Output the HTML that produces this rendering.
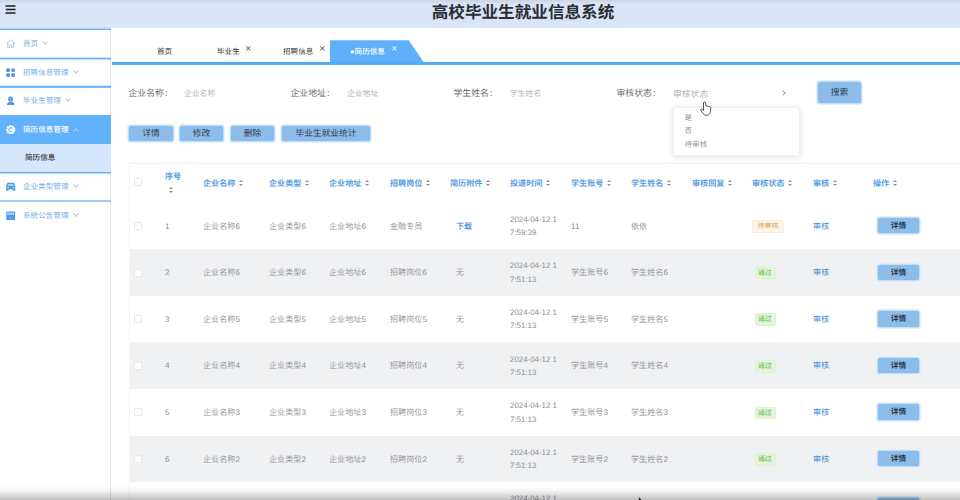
<!DOCTYPE html><html lang="zh-CN"><head><meta charset="utf-8"><title>高校毕业生就业信息系统</title><style>*{box-sizing:border-box;margin:0;padding:0}
html,body{width:960px;height:500px;overflow:hidden;background:#fff}
body{position:relative;text-rendering:geometricPrecision;font-family:"Liberation Sans","Noto Sans CJK SC",sans-serif;color:#666}
.abs,span.th,span.td,span.tag,span.btn,span.cb,span.sort,.tr{position:absolute}
.tbl-l{position:absolute;left:129px;top:163px;width:1px;height:337px;background:#f5f5f6}
.header{position:absolute;left:0;top:0;width:960px;height:28px;background:linear-gradient(to bottom,#c8d4e5 0,#d9e5f6 4px,#d9e5f6 21px,#dce6fb 27px)}
.header .hl{display:none}
.title{position:absolute;left:0;width:960px;top:0;height:28px;line-height:25px;text-align:center;font-size:16.6px;font-weight:bold;color:#2a2f36;padding-left:86px;letter-spacing:0}
.burger{position:absolute;left:6px;top:6px;width:10px;height:8px}
.burger i{position:absolute;left:0;width:10px;height:1.6px;background:#222}
.side{position:absolute;left:0;top:28px;width:111px;height:472px;background:#fff;border-right:1px solid #e6e6e6}
.mi{position:absolute;left:0;width:111px;height:29px;overflow:hidden;border-top:0;background:transparent;color:#78b0e4;font-size:7.6px;line-height:29px;padding-left:23px;white-space:nowrap}
.mi.act{background:#61b1fb;color:#fff;font-weight:500}
.mi.sub{background:#d5e7fc;color:#2e3238;padding-left:25px;font-weight:500}
.mi svg{position:absolute;left:6.2px;top:var(--it);width:9.4px;height:9.4px}
.mi .arr{display:inline-block;width:4px;height:4px;border-right:1px solid #a9c9e8;border-bottom:1px solid #a9c9e8;transform:rotate(45deg);margin-left:5px;position:relative;top:-2px}
.mi.act .arr{border-color:#a3d2fb;transform:rotate(225deg);top:1px}
.tabs{position:absolute;left:112px;top:62px;width:848px;height:3px;background:#56aaf1}
.tab{position:absolute;top:41px;height:21px;line-height:21px;font-size:7.6px;color:#333;white-space:nowrap}
.tab .x{position:absolute;top:-2px;font-size:11px;color:#666}
.tabact{position:absolute;left:329.7px;top:40.2px;width:95px;height:22px;background:#5eb0fa;clip-path:polygon(0 0,79px 0,94px 22px,0 22px)}
.lbl{position:absolute;font-size:8.9px;color:#595c63;font-weight:350;margin-left:-.5px;white-space:nowrap}
.ph{position:absolute;font-size:7.8px;color:#a8abb2;font-weight:350;white-space:nowrap}
span.btn{background:#8bbcea;color:#34404e;text-align:center;font-size:8.7px;border-radius:2px;box-shadow:0 0 0 .6px #a9d0f4,0 0 0 2px rgba(222,236,251,.85);white-space:nowrap}
span.btn.sm{font-size:7.7px;font-weight:700;color:#2c3846}
.dd{position:absolute;left:673px;top:107px;width:127px;height:49px;background:#fff;border-radius:3px;box-shadow:0 1px 6px rgba(0,0,0,.13);border:1px solid #f0f0f0}
.dd span{position:absolute;left:10.5px;font-size:7.6px;color:#999;white-space:nowrap}
.tbl{position:absolute;left:0;top:0}
.th-row{position:absolute;left:129px;top:163px;width:831px;height:40px;border-top:1px solid #f0f0f0}
.th-row>*{margin-left:-129px;margin-top:-163px}
span.th{font-size:8.1px;font-weight:bold;color:#5a9fe0;white-space:nowrap;line-height:12px}
span.td{font-size:8.1px;color:#8c8e93;font-weight:350;white-space:nowrap;line-height:16px}
span.td.lnk{color:#3b8fd9;font-weight:400}
span.td.lnk.b{font-weight:500;color:#3388e0}
span.td.dt{font-size:7.9px}
.tr{left:129px;width:831px;background:#fff}
.tr.alt{background:#f0f1f3}
span.cb{width:8px;height:8px;border:1px solid #e6e8ee;border-radius:1px;background:#fff}
span.sort{width:6px;height:9px}
span.sort i{position:absolute;left:0;border-left:2.2px solid transparent;border-right:2.2px solid transparent}
span.sort i.u{top:0;border-bottom:2.7px solid #8d9095}
span.sort i.d{top:3.6px;border-top:2.7px solid #8d9095}
span.tag{white-space:nowrap;font-size:7px;height:12.8px;line-height:12.6px;padding:0 4.5px;border-radius:2px;border:1px solid}
span.tag.warn{color:#dc9f4a;background:#fdf5ea;border-color:#faecd8}
span.tag.ok{color:#5db53a;background:#e4f6da;border-color:#dcf2d0;padding:0 3.2px 0 1.7px}
.fade{position:absolute;left:0;top:486px;width:960px;height:14px;background:linear-gradient(to bottom,rgba(0,0,0,0),rgba(0,0,0,.04) 30%,rgba(0,0,0,.24))}

.ln{position:absolute;left:0;width:111px;height:1px;background:#62aff3}
</style></head><body>
<div class="header"><div class="hl"></div>
<svg class="burger" viewBox="0 0 11 9" style="left:5px;top:5px;width:11px;height:9px"><path d="M0.5 0.9H10.5M3 4.5H10.5M0.5 8.1H10.5" stroke="#1a1a1a" stroke-width="1.5" fill="none"/><path d="M2.6 2.9 L0.4 4.5 L2.6 6.1Z" fill="#1a1a1a"/></svg>
<div class="title">高校毕业生就业信息系统</div></div>
<div class="side">
<div class="ln" style="top:0px;opacity:0.6"></div><div class="ln" style="top:1px;opacity:0.9"></div><div class="ln" style="top:29px;opacity:0.3"></div><div class="ln" style="top:30px;opacity:1"></div><div class="ln" style="top:31px;opacity:0.4"></div><div class="ln" style="top:57px;opacity:0.2"></div><div class="ln" style="top:58px;opacity:1"></div><div class="ln" style="top:59px;opacity:0.8"></div><div class="ln" style="top:144px;opacity:1"></div><div class="ln" style="top:145px;opacity:0.5"></div><div class="ln" style="top:172px;opacity:0.6"></div><div class="ln" style="top:173px;opacity:0.65"></div>
<div class="mi" style="top:0px;height:29px;line-height:32.2px;--it:11.1px"><svg viewBox="0 0 10 10"><path d="M0.7 4.9 L5 0.9 L9.3 4.9 M1.9 4.2 V9.2 H3.9 V6.4 H6.1 V9.2 H8.1 V4.2" fill="none" stroke="#93c2ee" stroke-width="0.9" stroke-linejoin="round" stroke-linecap="round"/></svg>首页<i class="arr"></i></div>
<div class="mi" style="top:29px;height:29px;line-height:31.0px;--it:10.5px"><svg viewBox="0 0 10 10"><rect x="0.2" y="0.2" width="4.1" height="4.1" rx="1.3" fill="#4d9be6"/><rect x="5.5" y="0.2" width="4.1" height="4.1" rx="2" fill="#4d9be6"/><rect x="0.2" y="5.5" width="4.1" height="4.1" rx="1.3" fill="#4d9be6"/><rect x="5.5" y="5.5" width="4.1" height="4.1" rx="1.3" fill="#4d9be6"/></svg>招聘信息管理<i class="arr"></i></div>
<div class="mi" style="top:58px;height:29px;line-height:30.0px;--it:10.0px"><svg viewBox="0 0 10 10"><circle cx="5" cy="3.1" r="2.7" fill="#4d9be6"/><circle cx="5" cy="3.1" r="1.1" fill="#8cc0f2"/><path d="M0.9 10 C1 7.4 2.6 6.2 5 6.2 C7.4 6.2 9 7.4 9.1 10 Z" fill="#4d9be6"/></svg>毕业生管理<i class="arr"></i></div>
<div class="mi act" style="top:87px;height:29px;line-height:29.0px;--it:9.5px"><svg viewBox="0 0 10 10"><circle cx="5" cy="5" r="4.3" fill="none" stroke="#fff" stroke-width="1.4" stroke-dasharray="1.9 1.1"/><circle cx="5" cy="5" r="4" fill="#fff"/><path d="M6.6 3.6 A2.1 2.1 0 1 0 6.6 6.4" fill="none" stroke="#61b1fb" stroke-width="1.1"/></svg>简历信息管理<i class="arr"></i></div>
<div class="mi sub" style="top:116px;height:28px;line-height:28.0px;--it:9.0px">简历信息</div>
<div class="mi" style="top:144px;height:28px;line-height:29.2px;--it:9.6px"><svg viewBox="0 0 10 10"><path d="M2.2 0.8 H7.8 C8.4 0.8 8.8 1.1 9 1.7 L9.8 4.6 V9.4 H7.4 V8 H2.6 V9.4 H0.2 V4.6 L1 1.7 C1.2 1.1 1.6 0.8 2.2 0.8 Z" fill="#4d9be6"/><path d="M2.3 2 H7.7 L8.3 4.2 H1.7 Z" fill="#a9d1f7"/><circle cx="2.3" cy="6" r="0.8" fill="#cfe6fb"/><circle cx="7.7" cy="6" r="0.8" fill="#cfe6fb"/></svg>企业类型管理<i class="arr"></i></div>
<div class="mi" style="top:172px;height:29px;line-height:31.4px;--it:10.7px"><svg viewBox="0 0 10 10"><rect x="0.3" y="0.5" width="9.4" height="9.2" rx="0.8" fill="#4d9be6"/><path d="M1.2 1.6 H8.8 V3.3 C8.8 4.4 7.3 4.5 6.9 3.7 C6.5 4.5 5.4 4.5 5 3.7 C4.6 4.5 3.5 4.5 3.1 3.7 C2.7 4.5 1.2 4.4 1.2 3.3 Z" fill="#b9dafa"/><path d="M3.1 1.6V3.6M5 1.6V3.6M6.9 1.6V3.6" stroke="#4d9be6" stroke-width="0.5"/><rect x="3.6" y="6.6" width="2.8" height="1.4" fill="#7db8f0"/></svg>系统公告管理<i class="arr"></i></div>
</div>
<div class="tabs"></div>
<div class="tabact"></div>
<div class="tab" style="left:157px">首页</div>
<div class="tab" style="left:217px">毕业生<span class="x" style="left:28px">×</span></div>
<div class="tab" style="left:283px">招聘信息<span class="x" style="left:36px">×</span></div>
<div class="tab" style="left:350px;color:#fff;font-weight:500">●简历信息<span class="x" style="left:41px;color:#eaf4ff">×</span></div>
<div class="lbl" style="left:129px;top:86.4px">企业名称<i style="font-style:normal;margin-left:1px">:</i></div><div class="ph" style="left:184px;top:87.5px">企业名称</div>
<div class="lbl" style="left:291px;top:86.4px">企业地址<i style="font-style:normal;margin-left:1px">:</i></div><div class="ph" style="left:347px;top:87.5px">企业地址</div>
<div class="lbl" style="left:454px;top:86.4px">学生姓名<i style="font-style:normal;margin-left:1px">:</i></div><div class="ph" style="left:510px;top:87.5px">学生姓名</div>
<div class="lbl" style="left:617px;top:86.4px">审核状态<i style="font-style:normal;margin-left:1px">:</i></div><div class="ph" style="left:673px;top:86.6px;font-size:8.8px;color:#a8abb2">审核状态</div>
<div class="abs" style="position:absolute;left:781px;top:90.5px;width:4px;height:4px;border-top:1px solid #aaa;border-right:1px solid #aaa;transform:rotate(45deg)"></div>
<span class="btn" style="left:818px;top:82px;width:43px;height:21.3px;line-height:21px">搜索</span>
<div class="dd"><span style="top:3.7px">是</span><span style="top:17.3px">否</span><span style="top:31px">待审核</span></div>
<svg class="abs" style="position:absolute;left:700px;top:101px;width:12px;height:15px" viewBox="0 0 12 15"><path d="M3.5 1.8 C3.5 0.8 5.7 0.8 5.7 1.8 V4.8 L9.6 5.5 C10.6 5.8 10.9 6.4 10.8 7.3 L10.4 10.6 C10.2 12.6 9 14.2 7.2 14.2 H5.8 C4.8 14.2 4 13.7 3.3 12.7 L0.7 9.3 C0.1 8.4 1.3 7.5 2.1 8.3 L3.5 9.5 Z" fill="#fff" stroke="#333" stroke-width="0.85" stroke-linejoin="round"/></svg>
<span class="btn" style="left:129px;top:126px;width:44px;height:15.4px;line-height:15px">详情</span>
<span class="btn" style="left:180px;top:126px;width:43px;height:15.4px;line-height:15px">修改</span>
<span class="btn" style="left:231px;top:126px;width:43px;height:15.4px;line-height:15px">删除</span>
<span class="btn" style="left:282px;top:126px;width:88px;height:15.4px;line-height:15px">毕业生就业统计</span>

<div class="tbl">
<div class="th-row">
<span class="cb" style="left:134px;top:176.5px"></span>
<span class="th" style="left:165px;top:170px">序号</span><span class="sort" style="left:168.5px;top:186px"><i class="u"></i><i class="d"></i></span>
<span class="th" style="left:203px;top:177px">企业名称</span><span class="sort" style="left:239.4px;top:179px"><i class="u"></i><i class="d"></i></span>
<span class="th" style="left:269px;top:177px">企业类型</span><span class="sort" style="left:305.4px;top:179px"><i class="u"></i><i class="d"></i></span>
<span class="th" style="left:329px;top:177px">企业地址</span><span class="sort" style="left:365.4px;top:179px"><i class="u"></i><i class="d"></i></span>
<span class="th" style="left:390px;top:177px">招聘岗位</span><span class="sort" style="left:426.4px;top:179px"><i class="u"></i><i class="d"></i></span>
<span class="th" style="left:450px;top:177px">简历附件</span><span class="sort" style="left:486.4px;top:179px"><i class="u"></i><i class="d"></i></span>
<span class="th" style="left:510px;top:177px">投递时间</span><span class="sort" style="left:546.4px;top:179px"><i class="u"></i><i class="d"></i></span>
<span class="th" style="left:571px;top:177px">学生账号</span><span class="sort" style="left:607.4px;top:179px"><i class="u"></i><i class="d"></i></span>
<span class="th" style="left:631px;top:177px">学生姓名</span><span class="sort" style="left:667.4px;top:179px"><i class="u"></i><i class="d"></i></span>
<span class="th" style="left:692px;top:177px">审核回复</span><span class="sort" style="left:728.4px;top:179px"><i class="u"></i><i class="d"></i></span>
<span class="th" style="left:752px;top:177px">审核状态</span><span class="sort" style="left:788.4px;top:179px"><i class="u"></i><i class="d"></i></span>
<span class="th" style="left:813px;top:177px">审核</span><span class="sort" style="left:833.2px;top:179px"><i class="u"></i><i class="d"></i></span>
<span class="th" style="left:873px;top:177px">操作</span><span class="sort" style="left:893.2px;top:179px"><i class="u"></i><i class="d"></i></span>
</div>
<div class="tr" style="top:202.6px;height:46.6px"></div>
<span class="cb" style="left:134px;top:221.9px"></span>
<span class="td" style="left:165px;top:218.5px">1</span>
<span class="td" style="left:203px;top:218.5px">企业名称6</span>
<span class="td" style="left:269px;top:218.5px">企业类型6</span>
<span class="td" style="left:329px;top:218.5px">企业地址6</span>
<span class="td" style="left:390px;top:218.5px">金融专员</span>
<span class="td lnk b" style="left:456px;top:218.5px">下载</span>
<span class="td dt" style="left:510px;top:211.7px">2024-04-12 1</span>
<span class="td dt" style="left:510px;top:225.2px">7:59:39</span>
<span class="td" style="left:571px;top:218.5px">11</span>
<span class="td" style="left:631px;top:218.5px">依依</span>
<span class="tag warn" style="left:752px;top:220.1px">待审核</span>
<span class="td lnk" style="left:813px;top:218.5px">审核</span>
<span class="btn sm" style="left:877.6px;top:217.9px;width:41.6px;height:15.6px;line-height:15px">详情</span>
<div class="tr alt" style="top:249.2px;height:46.6px"></div>
<span class="cb" style="left:134px;top:268.5px"></span>
<span class="td" style="left:165px;top:265.1px">2</span>
<span class="td" style="left:203px;top:265.1px">企业名称6</span>
<span class="td" style="left:269px;top:265.1px">企业类型6</span>
<span class="td" style="left:329px;top:265.1px">企业地址6</span>
<span class="td" style="left:390px;top:265.1px">招聘岗位6</span>
<span class="td" style="left:456px;top:265.1px">无</span>
<span class="td dt" style="left:510px;top:258.3px">2024-04-12 1</span>
<span class="td dt" style="left:510px;top:271.8px">7:51:13</span>
<span class="td" style="left:571px;top:265.1px">学生账号6</span>
<span class="td" style="left:631px;top:265.1px">学生姓名6</span>
<span class="tag ok" style="left:755px;top:266.7px">通过</span>
<span class="td lnk" style="left:813px;top:265.1px">审核</span>
<span class="btn sm" style="left:877.6px;top:264.5px;width:41.6px;height:15.6px;line-height:15px">详情</span>
<div class="tr" style="top:295.8px;height:46.6px"></div>
<span class="cb" style="left:134px;top:315.1px"></span>
<span class="td" style="left:165px;top:311.7px">3</span>
<span class="td" style="left:203px;top:311.7px">企业名称5</span>
<span class="td" style="left:269px;top:311.7px">企业类型5</span>
<span class="td" style="left:329px;top:311.7px">企业地址5</span>
<span class="td" style="left:390px;top:311.7px">招聘岗位5</span>
<span class="td" style="left:456px;top:311.7px">无</span>
<span class="td dt" style="left:510px;top:304.9px">2024-04-12 1</span>
<span class="td dt" style="left:510px;top:318.4px">7:51:13</span>
<span class="td" style="left:571px;top:311.7px">学生账号5</span>
<span class="td" style="left:631px;top:311.7px">学生姓名5</span>
<span class="tag ok" style="left:755px;top:313.3px">通过</span>
<span class="td lnk" style="left:813px;top:311.7px">审核</span>
<span class="btn sm" style="left:877.6px;top:311.1px;width:41.6px;height:15.6px;line-height:15px">详情</span>
<div class="tr alt" style="top:342.4px;height:46.6px"></div>
<span class="cb" style="left:134px;top:361.7px"></span>
<span class="td" style="left:165px;top:358.3px">4</span>
<span class="td" style="left:203px;top:358.3px">企业名称4</span>
<span class="td" style="left:269px;top:358.3px">企业类型4</span>
<span class="td" style="left:329px;top:358.3px">企业地址4</span>
<span class="td" style="left:390px;top:358.3px">招聘岗位4</span>
<span class="td" style="left:456px;top:358.3px">无</span>
<span class="td dt" style="left:510px;top:351.5px">2024-04-12 1</span>
<span class="td dt" style="left:510px;top:365.0px">7:51:13</span>
<span class="td" style="left:571px;top:358.3px">学生账号4</span>
<span class="td" style="left:631px;top:358.3px">学生姓名4</span>
<span class="tag ok" style="left:755px;top:359.9px">通过</span>
<span class="td lnk" style="left:813px;top:358.3px">审核</span>
<span class="btn sm" style="left:877.6px;top:357.7px;width:41.6px;height:15.6px;line-height:15px">详情</span>
<div class="tr" style="top:389.0px;height:46.6px"></div>
<span class="cb" style="left:134px;top:408.3px"></span>
<span class="td" style="left:165px;top:404.9px">5</span>
<span class="td" style="left:203px;top:404.9px">企业名称3</span>
<span class="td" style="left:269px;top:404.9px">企业类型3</span>
<span class="td" style="left:329px;top:404.9px">企业地址3</span>
<span class="td" style="left:390px;top:404.9px">招聘岗位3</span>
<span class="td" style="left:456px;top:404.9px">无</span>
<span class="td dt" style="left:510px;top:398.1px">2024-04-12 1</span>
<span class="td dt" style="left:510px;top:411.6px">7:51:13</span>
<span class="td" style="left:571px;top:404.9px">学生账号3</span>
<span class="td" style="left:631px;top:404.9px">学生姓名3</span>
<span class="tag ok" style="left:755px;top:406.5px">通过</span>
<span class="td lnk" style="left:813px;top:404.9px">审核</span>
<span class="btn sm" style="left:877.6px;top:404.3px;width:41.6px;height:15.6px;line-height:15px">详情</span>
<div class="tr alt" style="top:435.6px;height:46.6px"></div>
<span class="cb" style="left:134px;top:454.9px"></span>
<span class="td" style="left:165px;top:451.5px">6</span>
<span class="td" style="left:203px;top:451.5px">企业名称2</span>
<span class="td" style="left:269px;top:451.5px">企业类型2</span>
<span class="td" style="left:329px;top:451.5px">企业地址2</span>
<span class="td" style="left:390px;top:451.5px">招聘岗位2</span>
<span class="td" style="left:456px;top:451.5px">无</span>
<span class="td dt" style="left:510px;top:444.7px">2024-04-12 1</span>
<span class="td dt" style="left:510px;top:458.2px">7:51:13</span>
<span class="td" style="left:571px;top:451.5px">学生账号2</span>
<span class="td" style="left:631px;top:451.5px">学生姓名2</span>
<span class="tag ok" style="left:755px;top:453.1px">通过</span>
<span class="td lnk" style="left:813px;top:451.5px">审核</span>
<span class="btn sm" style="left:877.6px;top:450.9px;width:41.6px;height:15.6px;line-height:15px">详情</span>
<div class="tr" style="top:482.20000000000005px;height:46.6px"></div>
<span class="cb" style="left:134px;top:501.5px"></span>
<span class="td" style="left:165px;top:498.1px">7</span>
<span class="td" style="left:203px;top:498.1px">企业名称1</span>
<span class="td" style="left:269px;top:498.1px">企业类型1</span>
<span class="td" style="left:329px;top:498.1px">企业地址1</span>
<span class="td" style="left:390px;top:498.1px">招聘岗位1</span>
<span class="td" style="left:456px;top:498.1px">无</span>
<span class="td dt" style="left:510px;top:491.3px">2024-04-12 1</span>
<span class="td dt" style="left:510px;top:504.8px">7:51:13</span>
<span class="td" style="left:571px;top:498.1px">学生账号1</span>
<span class="td" style="left:631px;top:498.1px">学生姓名1</span>
<span class="tag ok" style="left:755px;top:499.7px">通过</span>
<span class="td lnk" style="left:813px;top:498.1px">审核</span>
<span class="btn sm" style="left:877.6px;top:497.5px;width:41.6px;height:15.6px;line-height:15px">详情</span>
</div>
<div class="tbl-l"></div>
<svg class="arrowcur" style="position:absolute;left:637.6px;top:495.6px;width:8px;height:12px" viewBox="0 0 8 12"><path d="M0.6 0.6 L0.6 10 L2.8 7.9 L4.6 11.6 L6 11 L4.2 7.3 L7.2 7.3 Z" fill="#111" stroke="#fff" stroke-width="0.7"/></svg>
<div class="fade"></div>

</body></html>
